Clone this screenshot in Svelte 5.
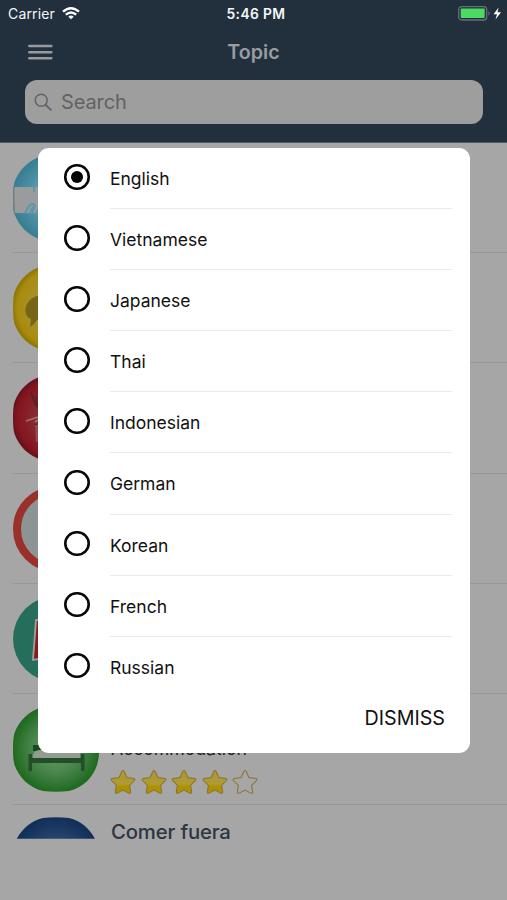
<script>
  const languages = ['English', 'Vietnamese', 'Japanese', 'Thai', 'Indonesian', 'German', 'Korean', 'French', 'Russian'];
  let selected = $state('English');

  const topics = [
    { icon: 'hands' },
    { icon: 'chat' },
    { icon: 'deer' },
    { icon: 'ring' },
    { icon: 'card' },
    { icon: 'bed', subtitle: 'Accommodation', stars: 4 },
    { icon: 'food', title: 'Comer fuera' }
  ];
  const star = 'M12 1 Q12.8 1 13.4 2.3 L15.8 7.6 L22.4 8.6 Q24.3 9.2 22.8 10.8 L18.3 15.2 L19.4 21.6 Q19.4 23.4 17.6 22.7 L12 19.7 L6.4 22.7 Q4.6 23.4 4.6 21.6 L5.7 15.2 L1.2 10.8 Q-.3 9.2 1.6 8.6 L8.2 7.6 L10.6 2.3 Q11.2 1 12 1Z';
  const blob = 'M30 1 Q43 -.6 56 1 C70 4 80 15 84 27 Q86.5 36 86 43 Q86.5 50 84 59 C80 71 70 82 56 85 Q43 86.6 30 85 C16 82 6 71 1.5 59 Q0 54 0 43 Q0 32 1.5 27 C6 15 16 4 30 1Z';
</script>

<div class="screen">
  <header>
    <div class="status">
      <div class="carrier">
        <span>Carrier</span>
        <svg width="18" height="13" viewBox="0 0 18 13" fill="none" stroke="#fff" stroke-width="2.3">
          <path d="M1 4.7 Q9 -2.3 17 4.7" />
          <path d="M3.8 7.7 Q9 3.2 14.2 7.7" />
          <path d="M9 12.3 L6.3 9.7 Q9 7.5 11.7 9.7Z" fill="#fff" stroke="none" />
        </svg>
      </div>
      <strong>5:46 PM</strong>
      <svg class="battery" width="44" height="15" viewBox="0 0 44 15">
        <rect x=".7" y=".7" width="28" height="13.3" rx="3" fill="none" stroke="#66707a" stroke-width="1.3" />
        <rect x="2.7" y="2.6" width="24" height="9.5" rx="1" fill="#4cdb62" />
        <path d="M30.4 5 Q33 7.3 30.4 9.7Z" fill="#66707a" />
        <path d="M40.6 1.5 L35.6 8.3 H39 L37.5 13.5 L43 6.3 H39.5Z" fill="#fff" />
      </svg>
    </div>
    <div class="nav">
      <svg class="menu" width="25" height="17" viewBox="0 0 25 17" stroke="#969a9e" stroke-width="2.6" stroke-linecap="round">
        <path d="M1.3 2H23.3M1.3 8.2H23.3M1.3 14.2H23.3" />
      </svg>
      <h1>Topic</h1>
    </div>
    <label class="search">
      <svg width="19" height="19" viewBox="0 0 19 19" fill="none" stroke="#646464" stroke-width="1.5" stroke-linecap="round">
        <circle cx="7.2" cy="7.2" r="6" /><path d="M11.6 11.7 L16.8 16.9" stroke-width="2" />
      </svg>
      <span>Search</span>
    </label>
  </header>

  <main>
    {#each topics as topic}
      <section class="topic">
        <svg class="icon" class:cut={topic.icon === 'food'} width="86" height="86" viewBox="0 0 86 86">
          <defs>
            <radialGradient id="blue"><stop offset=".5" stop-color="#5598ac" /><stop offset="1" stop-color="#397f94" /></radialGradient>
            <radialGradient id="yellow"><stop offset=".5" stop-color="#a8912d" /><stop offset=".9" stop-color="#a88c0c" /><stop offset="1" stop-color="#927a08" /></radialGradient>
            <radialGradient id="red"><stop offset="0" stop-color="#8c4248" /><stop offset=".9" stop-color="#84151e" /><stop offset="1" stop-color="#69131a" /></radialGradient>
            <radialGradient id="green"><stop offset="0" stop-color="#709b6b" /><stop offset=".6" stop-color="#46834a" /><stop offset="1" stop-color="#206b20" /></radialGradient>
            <radialGradient id="navy"><stop offset="0" stop-color="#3b5c83" /><stop offset="1" stop-color="#112f58" /></radialGradient>
            <linearGradient id="ruby" x2="0" y2="1"><stop stop-color="#792b30" /><stop offset="1" stop-color="#8d1518" /></linearGradient>
          </defs>
          {#if topic.icon === 'hands'}
            <path d={blob} fill="url(#blue)" />
            <path d="M.7 32 H86 V59 L1.5 58 Q.3 45 .7 32Z" fill="#999b9c" />
            <path d="M.9 32 Q.1 44 1.5 58" fill="none" stroke="#737f84" stroke-width="1.5" />
            <path d="M21 37 V30 L26 26 M12 58 L16 51 Q20 47 22 51 L19 58 M16 59 L20 52 M22 60 L26 53" fill="none" stroke="#5598ac" stroke-width="1.8" />
          {:else if topic.icon === 'chat'}
            <path d={blob} fill="url(#yellow)" />
            <path d="M28 30 C10 33 9 51 18 54 L17 62 Q22 59 24 55 L40 53 V30Z" fill="#776516" />
          {:else if topic.icon === 'deer'}
            <path d={blob} fill="url(#red)" />
            <path d="M18 17 L22 29 L28 35 M23 21 L24 30 M23 49 L27 64" fill="none" stroke="#542027" stroke-width="1.5" />
            <path d="M13 46 L28 41 M22 47 L28 43" stroke="#96766b" stroke-width="1.8" />
            <path d="M22 50 H30 V67 H23Z" fill="#93494f" />
          {:else if topic.icon === 'ring'}
            <circle cx="43" cy="43" r="39" fill="#8c9496" stroke="#9b302a" stroke-width="8" />
          {:else if topic.icon === 'card'}
            <circle cx="43" cy="43" r="43" fill="#246e5b" />
            <path d="M23 24 L20 64 L60 57 V20Z" fill="url(#ruby)" stroke="#a1a098" stroke-width="1.8" />
          {:else if topic.icon === 'bed'}
            <path d={blob} fill="url(#green)" />
            <path d="M20 39 H29 V45 H20Z" fill="#174a23" />
            <path d="M20 51 Q20 44 27 44 H67 V52 H20Z" fill="#929c91" />
            <path d="M15.5 48 H19 V52 H68 V48 H71.5 V65 H68 V57 H19 V65 H15.5Z" fill="#234d2b" />
          {:else}
            <path d={blob} fill="url(#navy)" />
          {/if}
        </svg>
        <div class="info">
          {#if topic.title}<h2>{topic.title}</h2>{/if}
          {#if topic.subtitle}<p>{topic.subtitle}</p>{/if}
          {#if topic.stars}
            <div class="stars">
              {#each [1, 2, 3, 4, 5] as n}
                <svg width="26" height="26" viewBox="-.5 -.5 25 25">
                  <defs><linearGradient id="gold" x2="0" y2="1"><stop stop-color="#ad9737" /><stop offset=".6" stop-color="#b09a32" /><stop offset=".72" stop-color="#ad9100" /><stop offset="1" stop-color="#b09206" /></linearGradient></defs>
                  <path d={star} fill={n <= topic.stars ? 'url(#gold)' : 'none'} stroke="#88742b" stroke-width="1" />
                </svg>
              {/each}
            </div>
          {/if}
        </div>
      </section>
    {/each}
  </main>

  <div class="dialog" role="dialog">
    <div class="options">
      {#each languages as language}
        <button class="option" onclick={() => (selected = language)}>
          <span class="radio" class:on={language === selected}></span>
          <span class="name">{language}</span>
        </button>
      {/each}
    </div>
    <button class="dismiss">DISMISS</button>
  </div>
</div>

<style>
  :global(body) { margin: 0; background: #a6a6a6; }
  .screen { position: relative; width: 507px; height: 900px; overflow: hidden; background: #a6a6a6; font-family: Inter, "Liberation Sans", sans-serif; }
  h1, h2, p { margin: 0; }
  button { border: 0; padding: 0; background: none; font: inherit; color: #111; text-align: left; }
  header { box-sizing: border-box; height: 142.5px; background: #22303e; border-bottom: 1px solid #4d5d62; }
  .status { display: grid; grid-template-columns: 1fr auto 1fr; align-items: center; height: 27px; padding: 0 5px 0 8px; color: #f5f7f8; }
  .carrier { display: flex; align-items: center; gap: 7px; font-size: 14px; letter-spacing: .15px; }
  .status strong { font-size: 13.8px; font-weight: 600; letter-spacing: .4px; margin-left: 2px; }
  .battery { justify-self: end; }
  .nav { display: grid; grid-template-columns: 1fr auto 1fr; align-items: center; height: 50px; padding: 0 28px; }
  h1 { color: #999ca0; font-size: 19.7px; font-weight: 600; line-height: 24px; }
  .search { display: flex; align-items: center; gap: 8px; height: 44px; margin: 3.4px 24.5px 0 25px; padding-left: 9px; border-radius: 12px; background: #9e9e9e; color: #626262; font-size: 20px; letter-spacing: -.1px; box-sizing: border-box; }
  .search span { margin-top: -1px; }
  .topic { display: flex; height: 109.4px; margin-left: 12px; border-bottom: 1px solid #989898; }
  .topic:last-child { border: 0; }
  .icon { flex: none; margin: 12px 0 0 1px; }
  .icon.cut { clip-path: inset(0 0 64px 0); }
  .info { padding-left: 12px; }
  h2 { margin-top: 14px; font-size: 20.3px; line-height: 26px; font-weight: 500; letter-spacing: -.15px; color: #2c3642; }
  p { margin-top: 43px; font-size: 17.7px; line-height: 24px; letter-spacing: -.05px; color: #202020; }
  .stars { display: flex; gap: 4.6px; margin: 8px 0 0 -1px; }
  .dialog { position: absolute; left: 38px; top: 148px; width: 432px; height: 605px; border-radius: 11px; background: #fff; display: flex; flex-direction: column; overflow: hidden; }
  .option { display: flex; align-items: center; width: 100%; height: 61.1px; padding: 0 18px 0 26px; }
  .radio { box-sizing: border-box; width: 25.5px; height: 25.5px; margin-top: -3.5px; box-shadow: inset 0 0 0 2.6px #080808; border-radius: 50%; display: grid; place-items: center; }
  .radio.on::after { content: ""; width: 12.5px; height: 12.5px; border-radius: 50%; background: #000; }
  .name { flex: 1; box-sizing: border-box; height: 61.1px; margin-left: 20.5px; border-bottom: 1.3px solid #e9e9e9; font-size: 17.5px; line-height: 61px; }
  .option:last-child .name { border: 0; }
  .dismiss { align-self: flex-end; margin: 7px 25px 0 0; font-size: 19.7px; line-height: 26px; }
</style>
